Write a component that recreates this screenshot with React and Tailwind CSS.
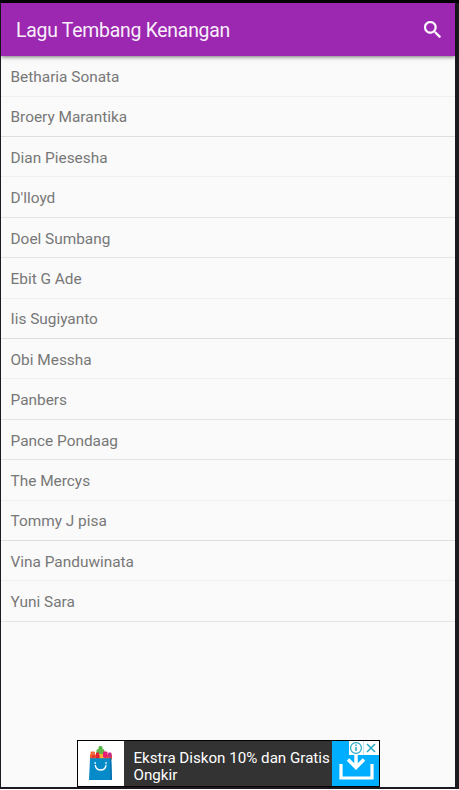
const artists = [
  { name: 'Betharia Sonata', line: 'border-[#efefef]' },
  { name: 'Broery Marantika', line: 'border-[#dedede]' },
  { name: 'Dian Piesesha', line: 'border-[#efefef]' },
  { name: "D'lloyd", line: 'border-[#e5e5e5]' },
  { name: 'Doel Sumbang', line: 'border-[#e5e5e5]' },
  { name: 'Ebit G Ade', line: 'border-[#efefef]' },
  { name: 'Iis Sugiyanto', line: 'border-[#dedede]' },
  { name: 'Obi Messha', line: 'border-[#efefef]' },
  { name: 'Panbers', line: 'border-[#e5e5e5]' },
  { name: 'Pance Pondaag', line: 'border-[#e5e5e5]' },
  { name: 'The Mercys', line: 'border-[#efefef]' },
  { name: 'Tommy J pisa', line: 'border-[#dedede]' },
  { name: 'Vina Panduwinata', line: 'border-[#efefef]' },
  { name: 'Yuni Sara', line: 'border-[#e5e5e5]' },
];

function Header() {
  return (
    <header className="relative z-10 flex h-[53px] shrink-0 items-center justify-between bg-[#9c27b0] pr-[14px] pl-[15px] shadow-[0_1px_4px_rgba(0,0,0,0.55)]">
      <h1 className="pt-[3px] text-[19.4px] leading-6 tracking-[-0.24px] whitespace-nowrap text-[#f8effa]">
        Lagu Tembang Kenangan
      </h1>
      <svg className="size-[17px]" viewBox="3 3 17.5 17.5" fill="#fff" stroke="#fff" strokeWidth="0.3">
        <path d="M15.5 14h-.79l-.28-.27A6.47 6.47 0 0 0 16 9.5 6.5 6.5 0 1 0 9.5 16c1.61 0 3.09-.59 4.23-1.57l.27.28v.79l5 4.99L20.49 19l-4.99-5zm-6 0a4.5 4.5 0 1 1 0-9 4.5 4.5 0 0 1 0 9z" />
      </svg>
    </header>
  );
}

function ShoppingBag() {
  return (
    <svg className="h-[45px] w-[46px] shrink-0" viewBox="0 0 46 45">
      <rect width="46" height="45" fill="#fff" />
      <rect x="20.5" y="5" width="4" height="4" rx="1.5" fill="#50b848" />
      <rect x="18.5" y="8" width="8" height="5" rx="1.5" fill="#62b846" />
      <rect x="12" y="13.5" width="22" height="5" fill="#ef5b24" />
      <rect x="12.5" y="10.5" width="4.5" height="4" rx="1" fill="#f26a3a" />
      <rect x="18" y="11.5" width="3" height="6" fill="#e21f38" />
      <rect x="22" y="13" width="4" height="4" fill="#fbb034" />
      <rect x="25" y="10.5" width="4.5" height="6" rx="1" fill="#e51b78" />
      <rect x="30" y="11.5" width="3.5" height="5" rx="1" fill="#c32a8c" />
      <rect x="14" y="14" width="3" height="3" fill="#e33b35" />
      <path d="M12 17.3h21.2l.8 21.7H11z" fill="#078ac8" />
      <path d="M31.8 17.3h1.4l.8 21.7h-1.6z" fill="#0870ae" />
      <path d="M17.3 24.5c1.2 6 9.5 6 10.7 0" fill="none" stroke="#fff" strokeWidth="1.3" strokeLinecap="round" />
      <circle cx="17.2" cy="22" r="0.9" fill="#d9f2fc" />
      <circle cx="28" cy="22" r="0.9" fill="#d9f2fc" />
    </svg>
  );
}

function AdBanner() {
  return (
    <aside className="mx-auto mt-auto flex h-[47px] w-[303px] shrink-0 border border-black bg-[#333]">
      <ShoppingBag />
      <p className="w-[208px] shrink-0 pt-[8.6px] pl-[10px] text-[15.15px] leading-[17.5px] whitespace-nowrap text-white">
        Ekstra Diskon 10% dan Gratis
        <br />
        Ongkir
      </p>
      <svg className="h-[45px] w-[47px] shrink-0" viewBox="0 0 47 45">
        <rect width="47" height="45" fill="#00aeff" />
        <path d="M9 23v14h31V23" fill="none" stroke="#fff" strokeWidth="3.2" />
        <path d="M24 13v14M16 18.5 24 26.5l8-8" fill="none" stroke="#fff" strokeWidth="3.5" />
        <rect x="17" width="30" height="14" fill="#fff" />
        <path d="M31.5 0v14" stroke="#c5eaf2" />
        <circle cx="24" cy="7" r="5.4" fill="none" stroke="#25aac4" strokeWidth="1.2" />
        <path d="M24 6v4M24 3.5v1.4" stroke="#25aac4" strokeWidth="1.5" />
        <path d="m35 3 8 8m0-8-8 8" stroke="#25aac4" strokeWidth="1.5" />
      </svg>
    </aside>
  );
}

export default function App() {
  return (
    <div className="h-[790px] w-[459px] bg-white font-['Roboto',sans-serif]">
      <div className="flex h-[789px] flex-col bg-[#1c1a20] pr-1 pb-0.5 pl-px">
        <div className="-mr-1 -ml-px h-[3px] shrink-0 bg-black" />
        <main className="flex min-h-0 flex-1 flex-col bg-[#fafafa]">
          <Header />
          <ul className="pt-[0.3px]">
            {artists.map(({ name, line }) => (
              <li
                key={name}
                className={`flex h-[40.4px] items-center border-b pt-[3.2px] pl-[9.5px] text-[15.4px] text-[#777] ${line}`}
              >
                {name}
              </li>
            ))}
          </ul>
          <AdBanner />
        </main>
      </div>
    </div>
  );
}
